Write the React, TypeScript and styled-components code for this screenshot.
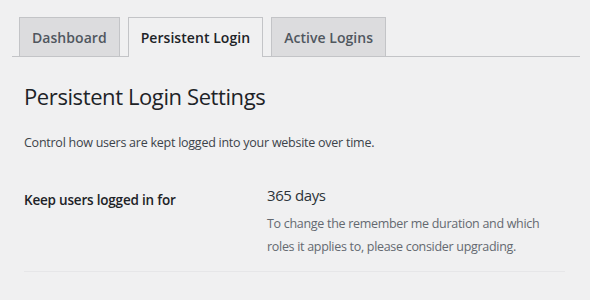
import React from 'react'
import styled, { createGlobalStyle } from 'styled-components'

const tabs = ['Dashboard', 'Persistent Login', 'Active Logins']

const App = () => {
  return (
    <Page>
      <GlobalStyle />
      <TabBar>
        {tabs.map((t) => (
          <Tab key={t} active={t === 'Persistent Login'}>
            {t}
          </Tab>
        ))}
      </TabBar>
      <Content>
        <Title>Persistent Login Settings</Title>
        <Description>
          Control how users are kept logged into your website over time.
        </Description>
        <SettingRow>
          <Label>Keep users logged in for</Label>
          <Field>
            <Value>365 days</Value>
            <Help>
              To change the remember me duration and which roles it applies to,
              please consider upgrading.
            </Help>
          </Field>
        </SettingRow>
      </Content>
    </Page>
  )
}

export default App

const GlobalStyle = createGlobalStyle`
  body {
    margin: 0;
    background: #f0f0f1;
    font-family: 'Open Sans', 'Noto Sans', sans-serif;
    color: #1d2327;
  }
`

const Page = styled.div`
  width: 590px;
  height: 300px;
  padding: 17px 10px 0 12px;
  box-sizing: border-box;
  overflow: hidden;
`

const TabBar = styled.nav`
  display: flex;
  gap: 8px;
  padding-left: 7px;
  border-bottom: 1px solid #c3c4c7;
`

const Tab = styled.div<{ active?: boolean }>`
  padding: 0 12px;
  display: flex;
  align-items: center;
  border: 1px solid #c3c4c7;
  border-bottom: none;
  margin-bottom: ${(p) => (p.active ? '-1px' : '0')};
  height: ${(p) => (p.active ? '39px' : '38px')};
  background: ${(p) => (p.active ? '#f0f0f1' : '#dcdcde')};
  color: ${(p) => (p.active ? '#1d2327' : '#50575e')};
  font-size: 14px;
  font-weight: 600;
  letter-spacing: 0.05px;
`

const Content = styled.div`
  padding: 0 15px 0 12px;
`

const Title = styled.h1`
  margin: 24px 0 0;
  font-size: 22px;
  font-weight: 400;
  line-height: 30px;
  letter-spacing: -0.4px;
`

const Description = styled.p`
  margin: 22px 0 0;
  font-size: 12.5px;
  line-height: 20px;
  color: #3c434a;
  letter-spacing: -0.25px;
`

const SettingRow = styled.div`
  display: grid;
  grid-template-columns: 243px 1fr;
  margin-top: 31px;
  padding-bottom: 13px;
  border-bottom: 1px solid #e6e6e8;
`

const Label = styled.div`
  font-size: 13.5px;
  font-weight: 600;
  line-height: 20px;
  padding-top: 6px;
  letter-spacing: -0.2px;
`

const Field = styled.div`
  display: flex;
  flex-direction: column;
`

const Value = styled.div`
  font-size: 15px;
  line-height: 22px;
  color: #2c3338;
  letter-spacing: -0.4px;
`

const Help = styled.p`
  margin: 6px 0 0;
  font-size: 12.5px;
  line-height: 23px;
  color: #646970;
  letter-spacing: -0.3px;
  max-width: 280px;
`
